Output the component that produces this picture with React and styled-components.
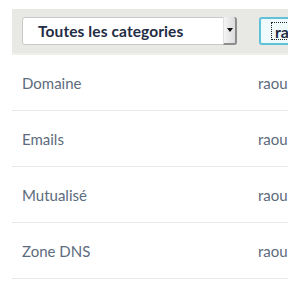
import React from "react";
import styled, { createGlobalStyle } from "styled-components";

const GlobalStyle = createGlobalStyle`
  body {
    margin: 0;
    background: #ffffff;
    font-family: "Source Sans Pro", Lato, "Open Sans", sans-serif;
    overflow: hidden;
  }
`;

const Page = styled.div`
  width: 600px;
  padding: 9px 0 0 12px;
`;

const Toolbar = styled.div`
  display: flex;
  align-items: center;
  gap: 22px;
  height: 44px;
  padding-left: 10px;
  background: #e8e8e4;
  border-bottom: 2px solid #efefec;
`;

const Select = styled.div`
  position: relative;
  display: flex;
  align-items: center;
  box-sizing: border-box;
  width: 215px;
  height: 28px;
  padding-left: 15px;
  background: #ffffff;
  border: 1px solid #c9c9c9;
  border-radius: 3px;
  font-size: 15.5px;
  font-weight: 700;
  letter-spacing: 0.1px;
  color: #1f2d45;
`;

const Arrow = styled.div`
  position: absolute;
  top: -1px;
  right: -1px;
  bottom: -1px;
  width: 11px;
  display: flex;
  align-items: center;
  justify-content: center;
  background: linear-gradient(to right, #f4f4f4, #dcdcdc);
  border-left: 1px solid #e0e0e0;
  border-right: 2px solid #8d8d8d;
  border-bottom: 2px solid #8d8d8d;
  border-radius: 0 3px 3px 0;

  &::after {
    content: "";
    border-left: 3px solid transparent;
    border-right: 3px solid transparent;
    border-top: 4px solid #111;
  }
`;

const Search = styled.div`
  display: flex;
  align-items: center;
  box-sizing: border-box;
  width: 200px;
  height: 28px;
  padding: 3px 4px 3px 10px;
  background: #effafc;
  border: 2px solid #5fc2d8;
  border-radius: 3px;
`;

const Focus = styled.div`
  display: flex;
  align-items: center;
  box-sizing: border-box;
  height: 100%;
  width: 100%;
  padding-left: 3px;
  border: 1px dotted #222;
  font-size: 16px;
  font-weight: 700;
  color: #1f2d45;
`;

const Row = styled.div`
  display: flex;
  align-items: center;
  height: 55px;
  border-bottom: 1px solid #e6e8ea;
  font-size: 15px;
  color: #5c6b7d;
`;

const Name = styled.div`
  width: 236px;
  padding-left: 10px;
`;

const Owner = styled.div``;

const rows = ["Domaine", "Emails", "Mutualisé", "Zone DNS"];

export default function App() {
  return (
    <Page>
      <GlobalStyle />
      <Toolbar>
        <Select>
          Toutes les categories
          <Arrow />
        </Select>
        <Search>
          <Focus>raoul</Focus>
        </Search>
      </Toolbar>
      {rows.map((r) => (
        <Row key={r}>
          <Name>{r}</Name>
          <Owner>raoul</Owner>
        </Row>
      ))}
    </Page>
  );
}
